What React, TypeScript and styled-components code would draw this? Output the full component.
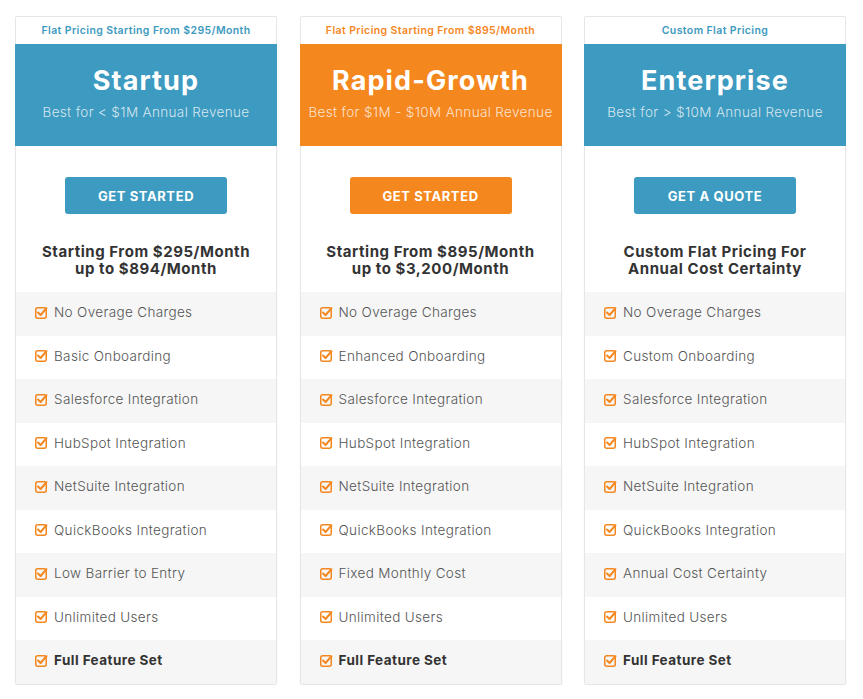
import React from "react"
import styled, { createGlobalStyle } from "styled-components"

const GlobalStyle = createGlobalStyle`
  body {
    margin: 0;
    background: #ffffff;
    font-family: Inter, "Open Sans", sans-serif;
  }
`

const BLUE = "#3d9ac0"
const ORANGE = "#f5871f"

interface Plan {
  label: string
  name: string
  tagline: string
  color: string
  cta: string
  heading: [string, string]
  features: string[]
}

const plans: Plan[] = [
  {
    label: "Flat Pricing Starting From $295/Month",
    name: "Startup",
    tagline: "Best for < $1M Annual Revenue",
    color: BLUE,
    cta: "Get Started",
    heading: ["Starting From $295/Month", "up to $894/Month"],
    features: [
      "No Overage Charges",
      "Basic Onboarding",
      "Salesforce Integration",
      "HubSpot Integration",
      "NetSuite Integration",
      "QuickBooks Integration",
      "Low Barrier to Entry",
      "Unlimited Users",
    ],
  },
  {
    label: "Flat Pricing Starting From $895/Month",
    name: "Rapid-Growth",
    tagline: "Best for $1M - $10M Annual Revenue",
    color: ORANGE,
    cta: "Get Started",
    heading: ["Starting From $895/Month", "up to $3,200/Month"],
    features: [
      "No Overage Charges",
      "Enhanced Onboarding",
      "Salesforce Integration",
      "HubSpot Integration",
      "NetSuite Integration",
      "QuickBooks Integration",
      "Fixed Monthly Cost",
      "Unlimited Users",
    ],
  },
  {
    label: "Custom Flat Pricing",
    name: "Enterprise",
    tagline: "Best for > $10M Annual Revenue",
    color: BLUE,
    cta: "Get a Quote",
    heading: ["Custom Flat Pricing For", "Annual Cost Certainty"],
    features: [
      "No Overage Charges",
      "Custom Onboarding",
      "Salesforce Integration",
      "HubSpot Integration",
      "NetSuite Integration",
      "QuickBooks Integration",
      "Annual Cost Certainty",
      "Unlimited Users",
    ],
  },
]

const Page = styled.div`
  display: grid;
  grid-template-columns: repeat(3, 262px);
  column-gap: 22.5px;
  padding: 16px 0 0 15px;
`

const Card = styled.div`
  display: flex;
  flex-direction: column;
`

const Label = styled.div<{ $color: string }>`
  height: 27px;
  border: 1px solid #e4e6ea;
  border-bottom: none;
  border-radius: 2px 2px 0 0;
  display: flex;
  align-items: center;
  justify-content: center;
  font-size: 10.5px;
  font-weight: 600;
  letter-spacing: 0.4px;
  color: ${(p) => p.$color};
`

const Header = styled.div<{ $color: string }>`
  height: 102px;
  background: ${(p) => p.$color};
  color: #fff;
  display: flex;
  flex-direction: column;
  align-items: center;
  padding-top: 20px;
  box-sizing: border-box;
`

const Title = styled.div`
  font-size: 27px;
  font-weight: 700;
  line-height: 34px;
  letter-spacing: 1.1px;
`

const Tagline = styled.div`
  margin-top: 6px;
  font-size: 13.5px;
  font-weight: 300;
  letter-spacing: 0.35px;
  color: rgba(255, 255, 255, 0.78);
`

const Body = styled.div`
  border: 1px solid #e6e6e6;
  border-top: none;
  border-radius: 0 0 3px 3px;
  box-shadow: 0 1px 2px rgba(0, 0, 0, 0.06);
  display: flex;
  flex-direction: column;
  align-items: center;
  padding-top: 31px;
  overflow: hidden;
`

const Button = styled.button<{ $color: string }>`
  width: 162px;
  height: 37px;
  border: none;
  border-radius: 3px;
  background: ${(p) => p.$color};
  color: #fff;
  font-family: inherit;
  font-size: 13px;
  font-weight: 700;
  text-transform: uppercase;
  letter-spacing: 0.6px;
  cursor: pointer;
`

const Heading = styled.div`
  margin: 30px 0 15px;
  font-size: 15px;
  font-weight: 700;
  line-height: 16.5px;
  letter-spacing: 0.55px;
  color: #333;
  text-align: center;
`

const List = styled.ul`
  list-style: none;
  margin: 0;
  padding: 0;
  align-self: stretch;
`

const Item = styled.li<{ $strong?: boolean }>`
  height: 43.5px;
  box-sizing: border-box;
  padding: 0 0 3px 19px;
  display: flex;
  align-items: center;
  gap: 6px;
  font-size: 13.5px;
  font-weight: ${(p) => (p.$strong ? 700 : 300)};
  letter-spacing: ${(p) => (p.$strong ? "0.45px" : "0.35px")};
  color: ${(p) => (p.$strong ? "#333" : "#555")};
  &:nth-child(odd) {
    background: #f6f6f6;
  }
`

const CheckIcon = () => (
  <svg width="13" height="13" viewBox="0 0 13 13" fill="none">
    <rect x="0.75" y="1.75" width="10.5" height="10.5" rx="2" stroke={ORANGE} strokeWidth="1.5" />
    <path d="M3 6.5 L5.6 9 L11.5 2.2" stroke={ORANGE} strokeWidth="2" strokeLinecap="round" strokeLinejoin="round" />
  </svg>
)

const PlanCard: React.FC<{ plan: Plan }> = ({ plan }) => (
  <Card>
    <Label $color={plan.color}>{plan.label}</Label>
    <Header $color={plan.color}>
      <Title>{plan.name}</Title>
      <Tagline>{plan.tagline}</Tagline>
    </Header>
    <Body>
      <Button $color={plan.color}>{plan.cta}</Button>
      <Heading>
        {plan.heading[0]}
        <br />
        {plan.heading[1]}
      </Heading>
      <List>
        {plan.features.map((f) => (
          <Item key={f}>
            <CheckIcon />
            {f}
          </Item>
        ))}
        <Item $strong>
          <CheckIcon />
          Full Feature Set
        </Item>
      </List>
    </Body>
  </Card>
)

export default function App() {
  return (
    <>
      <GlobalStyle />
      <Page>
        {plans.map((p) => (
          <PlanCard key={p.name} plan={p} />
        ))}
      </Page>
    </>
  )
}
